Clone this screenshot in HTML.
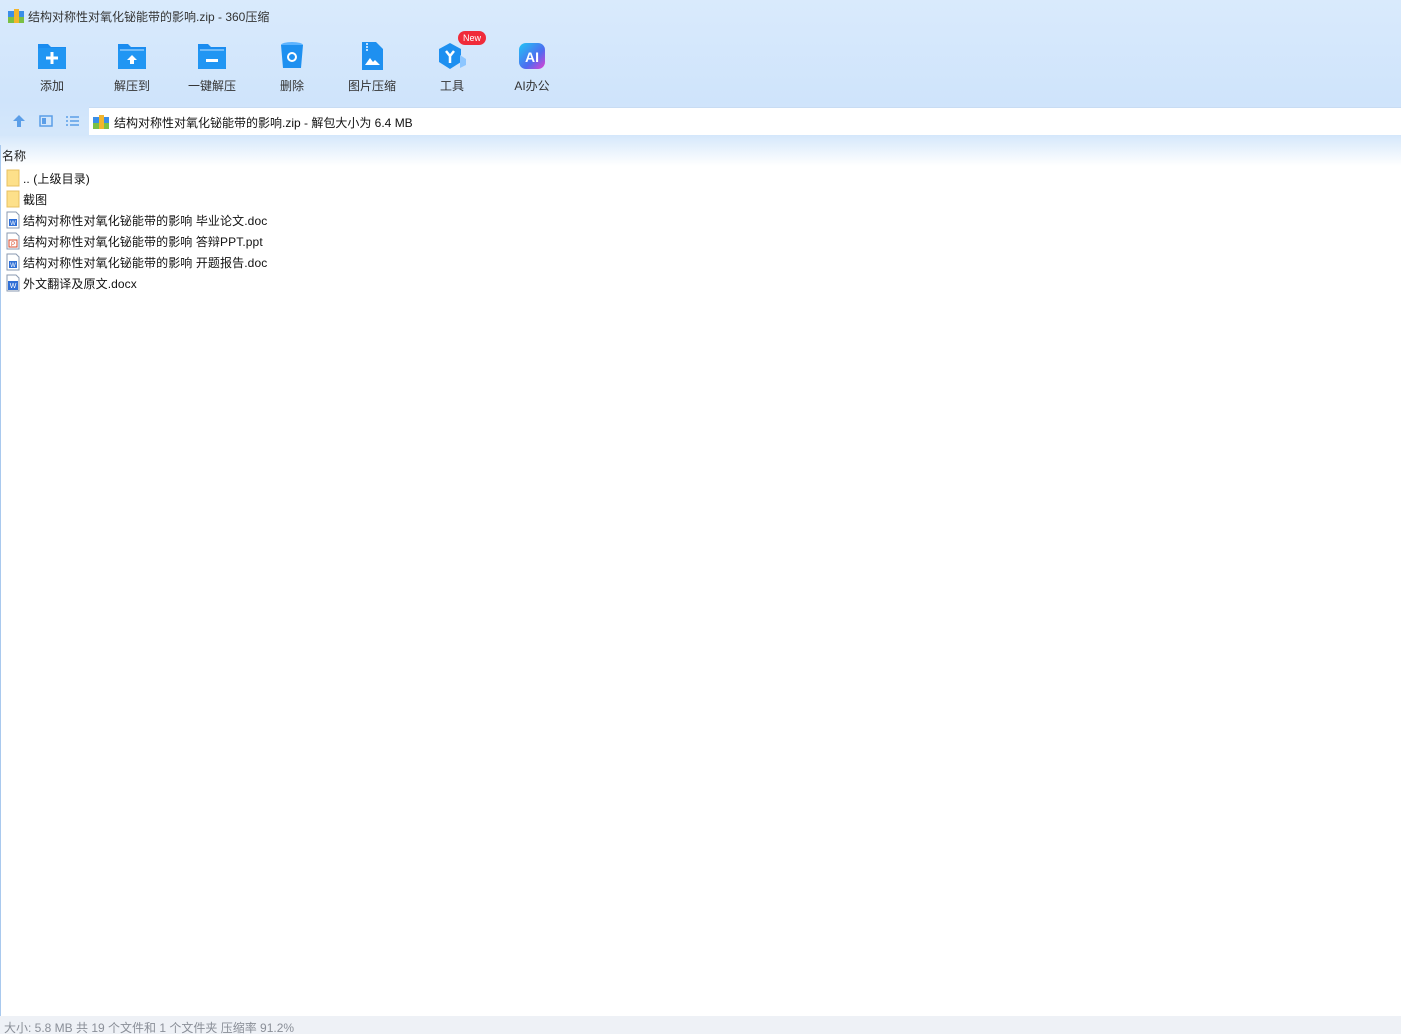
<!DOCTYPE html>
<html><head><meta charset="utf-8"><style>
*{margin:0;padding:0;box-sizing:border-box}
body{width:1401px;height:1034px;overflow:hidden;font-family:"Liberation Sans","Noto Sans CJK SC",sans-serif;font-size:12px;color:#222;background:#fff;position:relative}
.top{position:absolute;left:0;top:0;width:1401px;height:145px;background:linear-gradient(#d9eafc,#cfe4fb 70%,#d6e8fb)}
.title{position:absolute;left:28px;top:8px;font-size:12px;color:#333}
.tb{position:absolute;top:41px;width:80px;text-align:center}
.tb svg{display:block;margin:0 auto;overflow:visible}
.tb span{display:block;margin-top:6px;font-size:12px;color:#333}
.addr{position:absolute;left:89px;top:107px;width:1312px;height:28px;background:#fff;border-top:1px solid #c8dcf3}
.addr span{position:absolute;left:25px;top:6px;font-size:12px;color:#111}
.fade{position:absolute;left:0;top:136px;width:1401px;height:30px;background:linear-gradient(#d6e8fb,#fff)}
.lb{position:absolute;left:0;top:145px;width:1px;height:872px;background:#a9c9ee}
.row{position:absolute;left:6px;height:20px;font-size:12px;color:#111;white-space:nowrap}
.row span{position:absolute;left:17px;top:1px;letter-spacing:0.1px}
.status{position:absolute;left:0;top:1016px;width:1401px;height:18px;background:#eef1f6;color:#8a8f98;font-size:12px;padding:3px 0 0 4px}
</style></head><body>
<div class="top"></div>
<svg style="position:absolute;left:8px;top:9px" width="16" height="14"><rect x="0" y="2" width="16" height="12" fill="#3a8ee8"/><rect x="0" y="8" width="16" height="6" fill="#7bc043"/><rect x="6" y="0" width="5" height="14" fill="#f2b52c"/></svg>
<div class="title">结构对称性对氧化铋能带的影响.zip - 360压缩</div>

<div class="tb" style="left:12px"><svg width="32" height="30"><path d="M2 3h10l3 3h15v22H2z" fill="#1a8cf0"/><rect x="2" y="7" width="28" height="21" rx="2" fill="#2196f3"/><path d="M16 11v12M10 17h12" stroke="#fff" stroke-width="3"/></svg><span>添加</span></div>
<div class="tb" style="left:92px"><svg width="32" height="30"><path d="M2 3h10l3 3h15v22H2z" fill="#1a8cf0"/><rect x="2" y="8" width="28" height="20" rx="2" fill="#2196f3"/><path d="M4 9h24" stroke="#bfe0ff"/><path d="M16 14l-5 5h3v4h4v-4h3z" fill="#fff"/></svg><span>解压到</span></div>
<div class="tb" style="left:172px"><svg width="32" height="30"><path d="M2 3h10l3 3h15v22H2z" fill="#1a8cf0"/><rect x="2" y="8" width="28" height="20" rx="2" fill="#2196f3"/><path d="M4 9h24" stroke="#bfe0ff"/><rect x="10" y="18" width="12" height="3" fill="#fff"/></svg><span>一键解压</span></div>
<div class="tb" style="left:252px"><svg width="32" height="30"><ellipse cx="16" cy="4" rx="11" ry="3" fill="#5cb3ff"/><path d="M5 4l2 23h18l2-23z" fill="#1e90f0"/><circle cx="16" cy="16" r="4" fill="none" stroke="#fff" stroke-width="2"/></svg><span>删除</span></div>
<div class="tb" style="left:332px"><svg width="32" height="30"><path d="M6 1h14l7 7v21H6z" fill="#1e90f0"/><path d="M9 24l5-7 3 4 2-2 5 5z" fill="#fff"/><path d="M10 3h2M10 6h2M10 9h2" stroke="#bfe0ff" stroke-width="2"/></svg><span>图片压缩</span></div>
<div class="tb" style="left:412px"><svg width="32" height="30"><path d="M14 2l11 6v13l-11 7-11-7V8z" fill="#1e90f0"/><path d="M24 14l6 4v6l-6 3z" fill="#8cc6ff"/><path d="M10 10l4 5 4-5M14 15v7" stroke="#fff" stroke-width="2.5" fill="none"/><rect x="22" y="-10" width="28" height="14" rx="7" fill="#f02b3a"/><text x="36" y="0" font-size="9" fill="#fff" text-anchor="middle" font-family="Liberation Sans">New</text></svg><span>工具</span></div>
<div class="tb" style="left:492px"><svg width="32" height="30"><defs><linearGradient id="g" x1="0" y1="0" x2="1" y2="1"><stop offset="0" stop-color="#20c5f5"/><stop offset=".6" stop-color="#4f6bf0"/><stop offset="1" stop-color="#e43fd0"/></linearGradient></defs><rect x="3" y="2" width="26" height="26" rx="7" fill="url(#g)"/><text x="16" y="21" font-size="14" font-weight="bold" fill="#fff" text-anchor="middle" font-family="Liberation Sans">AI</text></svg><span>AI办公</span></div>

<svg style="position:absolute;left:12px;top:114px" width="70" height="14"><path d="M7 1l6 6H9v6H5V7H1z" fill="#5b9ee8"/><rect x="28" y="2" width="12" height="10" fill="none" stroke="#5b9ee8" stroke-width="1.5"/><rect x="30" y="4" width="4" height="6" fill="#5b9ee8"/><path d="M54 3h2M54 7h2M54 11h2M58 3h9M58 7h9M58 11h9" stroke="#5b9ee8" stroke-width="1.5"/></svg>
<div class="fade"></div>
<div class="addr"><svg style="position:absolute;left:4px;top:7px" width="16" height="14"><rect x="0" y="2" width="16" height="12" fill="#3a8ee8"/><rect x="0" y="8" width="16" height="6" fill="#7bc043"/><rect x="6" y="0" width="5" height="14" fill="#f2b52c"/></svg><span>结构对称性对氧化铋能带的影响.zip - 解包大小为 6.4 MB</span></div>
<div class="lb"></div>
<div style="position:absolute;left:2px;top:147px;font-size:12px">名称</div>

<div class="row" style="top:169px"><svg width="14" height="18"><rect x="1" y="1" width="12" height="16" fill="#fde08a" stroke="#e8c060"/></svg><span>.. (上级目录)</span></div>
<div class="row" style="top:190px"><svg width="14" height="18"><rect x="1" y="1" width="12" height="16" fill="#fde08a" stroke="#e8c060"/></svg><span>截图</span></div>
<div class="row" style="top:211px"><svg width="14" height="18"><path d="M1 1h9l3 3v13H1z" fill="#fff" stroke="#8a9ab0"/><rect x="3" y="8" width="8" height="7" fill="#2f6fd6"/><text x="7" y="14" font-size="6" fill="#fff" text-anchor="middle">W</text></svg><span>结构对称性对氧化铋能带的影响 毕业论文.doc</span></div>
<div class="row" style="top:232px"><svg width="14" height="18"><path d="M1 1h9l3 3v13H1z" fill="#fff" stroke="#8a9ab0"/><rect x="3" y="8" width="8" height="7" fill="#fff" stroke="#d84a2a"/><text x="7" y="14" font-size="6" fill="#d84a2a" text-anchor="middle">P</text></svg><span>结构对称性对氧化铋能带的影响 答辩PPT.ppt</span></div>
<div class="row" style="top:253px"><svg width="14" height="18"><path d="M1 1h9l3 3v13H1z" fill="#fff" stroke="#8a9ab0"/><rect x="3" y="8" width="8" height="7" fill="#2f6fd6"/><text x="7" y="14" font-size="6" fill="#fff" text-anchor="middle">W</text></svg><span>结构对称性对氧化铋能带的影响 开题报告.doc</span></div>
<div class="row" style="top:274px"><svg width="14" height="18"><path d="M1 1h9l3 3v13H1z" fill="#fff" stroke="#8a9ab0"/><rect x="2" y="7" width="10" height="9" fill="#2f6fd6"/><text x="7" y="14" font-size="7" fill="#fff" text-anchor="middle">W</text></svg><span>外文翻译及原文.docx</span></div>

<div class="status">大小: 5.8 MB 共 19 个文件和 1 个文件夹 压缩率 91.2%</div>
</body></html>
